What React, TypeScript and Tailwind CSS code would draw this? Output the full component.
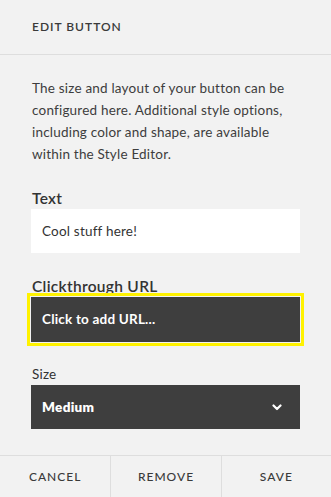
import React from "react";

export default function App() {
  return (
    <div
      className="w-[331px] h-[497px] bg-[#f2f2f2] flex flex-col text-[#333333] overflow-hidden"
      style={{ fontFamily: "Lato, 'Open Sans', sans-serif" }}
    >
      <div className="h-[54px] border-b border-[#dedede] flex items-center pl-[32px] box-content">
        <span className="text-[12px] tracking-[1px] font-semibold text-[#3a3a3a] mt-[-1px]">
          EDIT BUTTON
        </span>
      </div>

      <div className="flex-1 px-[31px] flex flex-col">
        <p className="pl-[1px] mt-[22px] text-[13.5px] leading-[22px] text-[#3d3d3d] tracking-[0.2px]">
          The size and layout of your button can be
          <br />
          configured here. Additional style options,
          <br />
          including color and shape, are available
          <br />
          within the Style Editor.
        </p>

        <label className="pl-[1px] mt-[22px] text-[15.5px] leading-[22px] font-semibold text-[#333] tracking-[0.3px]">
          Text
        </label>
        <div className="mt-[0px] h-[44px] w-[269px] bg-white flex items-center pl-[11px] text-[13.5px] text-[#333] tracking-[0.2px]">
          Cool stuff here!
        </div>

        <label className="pl-[1px] mt-[22px] text-[15.5px] leading-[22px] font-semibold text-[#333] tracking-[0.3px]">
          Clickthrough URL
        </label>
        <div className="mt-[0px] h-[45px] w-[269px] bg-[#3e3e3e] flex items-center pl-[11px] text-[13.5px] font-bold text-white tracking-[0.2px] outline-[3px] outline-solid outline-[#fff200] outline-offset-[1px]">
          Click to add URL...
        </div>

        <label className="pl-[1px] mt-[22px] text-[13.5px] leading-[20px] text-[#333] tracking-[0.2px]">
          Size
        </label>
        <div className="mt-[1px] h-[44px] w-[269px] bg-[#3e3e3e] flex items-center justify-between pl-[11px] pr-[18px] text-[13.5px] font-extrabold text-white tracking-[0.3px]">
          <span>Medium</span>
          <svg width="10" height="7" viewBox="0 0 10 7" fill="none">
            <polyline
              points="1.5,1.5 5,5 8.5,1.5"
              stroke="white"
              strokeWidth="2.2"
              strokeLinecap="round"
              strokeLinejoin="round"
            />
          </svg>
        </div>
      </div>

      <div className="h-[42px] border-t border-[#dedede] grid grid-cols-3 box-border">
        <div className="flex items-center justify-center pt-[1px] text-[12px] tracking-[1px] text-[#3a3a3a] font-medium">
          CANCEL
        </div>
        <div className="flex items-center justify-center pt-[1px] text-[12px] tracking-[1px] text-[#3a3a3a] font-medium border-l border-[#dedede]">
          REMOVE
        </div>
        <div className="flex items-center justify-center pt-[1px] text-[12px] tracking-[1px] text-[#3a3a3a] font-medium border-l border-[#dedede]">
          SAVE
        </div>
      </div>
    </div>
  );
}
